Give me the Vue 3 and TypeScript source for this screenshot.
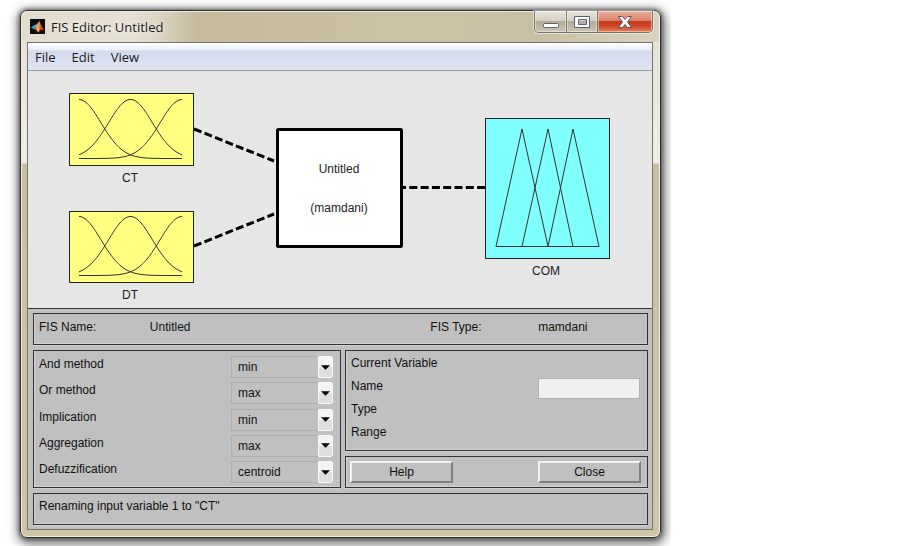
<script setup lang="ts">
import { reactive, ref } from 'vue'

interface Method {
  id: string
  label: string
  options: string[]
}

const methods: Method[] = [
  { id: 'and', label: 'And method', options: ['min', 'prod'] },
  { id: 'or', label: 'Or method', options: ['max', 'probor'] },
  { id: 'implication', label: 'Implication', options: ['min', 'prod'] },
  { id: 'aggregation', label: 'Aggregation', options: ['max', 'sum', 'probor'] },
  { id: 'defuzz', label: 'Defuzzification', options: ['centroid', 'bisector', 'mom'] },
]

const chosen = reactive<Record<string, string>>(
  Object.fromEntries(methods.map((m) => [m.id, m.options[0]])),
)
const variableName = ref('')

const inputs = [
  { name: 'CT', top: 22, height: 72, curves: 22, label: 111 },
  { name: 'DT', top: 140, height: 71, curves: 139, label: 228 },
]

// Gaussian membership function sampled across a 103-unit range
function gaussian(center: number): string {
  const sigma = 21.9
  const points: string[] = []
  for (let x = 0; x <= 103; x += 1) {
    const g = Math.exp(-((x - center) ** 2) / (2 * sigma * sigma))
    points.push(`${x + 10},${(65.5 - 59 * g).toFixed(1)}`)
  }
  return points.join(' ')
}
const curves = [0, 51.5, 103].map(gaussian)
</script>

<template>
  <div class="page">
    <div class="stage">
      <main class="window">
        <header class="titlebar">
          <svg class="logo" viewBox="0 0 16 16" aria-hidden="true">
            <rect width="16" height="16" fill="#0b0b0d" />
            <path d="M0.800 9 L5 6.500 L7.500 8.500 L4.800 11.200 Z" fill="#3f9fc0" />
            <path d="M5 6.500 L7 5.800 L10 2 L8.600 8 L6.600 9.600 Z" fill="#6cc4dc" />
            <path d="M4.800 11.200 L7.200 8.800 Q8.800 6.400 10 2 Q11.800 6.800 15.200 12.400 L12.200 10.800 L8.600 14.400 Q7 11 4.800 11.200 Z" fill="#e0541c" />
            <path d="M10 2 Q10.800 7 9.600 13.400 L8.600 14.400 Q7.400 11.400 6.400 10.400 Q8.800 7 10 2 Z" fill="#f7a540" />
          </svg>
          <h1>FIS Editor: Untitled</h1>
          <div class="captions">
            <button type="button" class="cap" aria-label="Minimize">
              <svg viewBox="0 0 18 14"><rect x="1.500" y="8.500" width="15" height="4" rx="1" fill="#fff" stroke="#5e6070" /></svg>
            </button>
            <button type="button" class="cap" aria-label="Maximize">
              <svg viewBox="0 0 18 14">
                <path fill-rule="evenodd" d="M1.500 1.500h15v11h-15z M5.500 4.500v5h8v-5z" fill="#fff" stroke="#5e6070" />
              </svg>
            </button>
            <button type="button" class="cap close" aria-label="Close window">
              <svg viewBox="0 0 18 14">
                <path d="M2.500 1.500h4l2.500 3 2.500-3h4l-4 5.500 4 5.500h-4l-2.500-3-2.500 3h-4l4-5.500z" fill="#fff" stroke="#5a5468" />
              </svg>
            </button>
          </div>
        </header>

        <div class="client">
          <nav class="menu">
            <button type="button">File</button>
            <button type="button">Edit</button>
            <button type="button">View</button>
          </nav>

          <svg class="diagram" viewBox="0 0 624 237" role="img" aria-label="Fuzzy inference system">
            <g class="link">
              <path d="M166 58 L246 90" />
              <path d="M166 175 L246 143" />
              <path d="M375 116.500 H457" stroke-dashoffset="5" />
            </g>
            <g v-for="item in inputs" :key="item.name">
              <rect class="input-box" x="41.5" :y="item.top + 0.5" width="124" :height="item.height" />
              <g class="curve" :transform="`translate(41 ${item.curves})`">
                <polyline v-for="(c, i) in curves" :key="i" :points="c" />
              </g>
              <text x="102" :y="item.label">{{ item.name }}</text>
            </g>
            <rect class="system-box" x="249.5" y="58.5" width="124" height="117" rx="1" />
            <text x="311" y="102">Untitled</text>
            <text x="311" y="141">(mamdani)</text>
            <rect class="output-box" x="457.5" y="47.5" width="124" height="140" />
            <g class="curve">
              <path d="M468 175.500 L494 58 L520 175.500 M494 175.500 L520 58 L545 175.500 M520 175.500 L545 58 L571 175.500 M468 175.500 H571" />
            </g>
            <text x="518" y="204">COM</text>
          </svg>

          <div class="panel">
            <section class="box summary">
              <span>FIS Name:</span>
              <span>Untitled</span>
              <span>FIS Type:</span>
              <span>mamdani</span>
            </section>

            <div class="columns">
              <section class="box methods">
                <div v-for="m in methods" :key="m.id" class="method">
                  <label :for="m.id">{{ m.label }}</label>
                  <div class="picker">
                    <select :id="m.id" v-model="chosen[m.id]">
                      <option v-for="o in m.options" :key="o">{{ o }}</option>
                    </select>
                    <span class="arrow"><svg viewBox="0 0 10 5"><path d="M0 0H10L5 5Z" /></svg></span>
                  </div>
                </div>
              </section>

              <div class="side">
                <section class="box variable">
                  <span>Current Variable</span>
                  <label class="name-row">Name<input v-model="variableName" type="text" /></label>
                  <span>Type</span>
                  <span>Range</span>
                </section>
                <section class="box actions">
                  <button type="button">Help</button>
                  <button type="button">Close</button>
                </section>
              </div>
            </div>

            <section class="box status">Renaming input variable 1 to "CT"</section>
          </div>
        </div>
      </main>
    </div>
  </div>
</template>

<style>
body {
  background: #fff;
}
</style>

<style scoped>
* {
  box-sizing: border-box;
}
.page {
  display: grid;
  grid-template-columns: minmax(0, 671fr) 231fr;
  font: 12px/16px "Liberation Sans", Arial, sans-serif;
  color: #111;
}
.stage {
  padding: 10px 10px 8px 20px;
  overflow: hidden;
}
.window {
  border: 1px solid #2e2e2c;
  border-radius: 7px;
  padding: 0 7px 7px 6px;
  background:
    linear-gradient(#e4dfd2 0, #f0ede6 152px, #c9bfa2 153px, #cfc5a8 100%);
  box-shadow:
    inset 0 0 0 1px #f1ecdc,
    0 0 4px 1px rgba(0, 0, 0, 0.45),
    1px 3px 11px 3px rgba(0, 0, 0, 0.55);
}
.titlebar {
  display: flex;
  align-items: center;
  height: 31px;
  margin: 0 -6px 0 -5px;
  padding: 0 6px 0 8px;
  border-radius: 6px 6px 0 0;
  background: linear-gradient(90deg, #e2dccd 0, #e6e1d5 110px, #ddd6c6 135px, #c5ba9c 175px, #cbc1a5 60%, #c9bfa4 80%, #d9d2c0 100%);
  box-shadow: inset 0 1px #f1ecdc;
}
.logo {
  width: 15px;
  height: 15px;
}
h1 {
  flex: 1;
  margin: 0 0 0 6px;
  font: 13px/20px "Open Sans", "Noto Sans", sans-serif;
  color: #1a1a1a;
  text-shadow: 0 0 6px #fff;
}
.captions {
  display: flex;
  align-self: flex-start;
  border: 1px solid #77736a;
  border-top: 0;
  border-radius: 0 0 5px 5px;
  overflow: hidden;
  box-shadow: 0 0 0 1px rgba(255, 255, 255, 0.5);
}
.cap {
  display: grid;
  place-items: center;
  width: 31px;
  height: 21px;
  padding: 0;
  border: 0;
  border-right: 1px solid #77736a;
  background: linear-gradient(#e9e6dc 0, #d3cec0 48%, #b3ac98 50%, #cbc5b3 100%);
  box-shadow: inset 0 0 0 1px rgba(255, 255, 255, 0.45);
}
.cap:first-child {
  width: 32px;
}
.cap svg {
  width: 18px;
  height: 14px;
}
.cap.close {
  width: 54px;
  border-right: 0;
  background: linear-gradient(#e8b0a0 0, #dc8068 46%, #c53a1c 50%, #cf4424 70%, #e08058 100%);
}
.client {
  border: 1px solid #77746b;
  background: #e6e6e6;
}
.menu {
  display: flex;
  gap: 16px;
  height: 28px;
  padding: 0 7px;
  border-bottom: 1px solid #9a9ca4;
  background: linear-gradient(#fff 0, #eaeef8 7px, #d4daed 8px, #e0e5f5 100%);
}
.menu button {
  padding: 0;
  border: 0;
  background: none;
  font: 13px/28px "Open Sans", "Noto Sans", sans-serif;
  color: #1a1a1a;
}
.diagram {
  display: block;
  width: 100%;
  height: auto;
}
.diagram text {
  font-size: 12px;
  text-anchor: middle;
  fill: #1c1c24;
}
.link {
  stroke: #000;
  stroke-width: 3;
  stroke-dasharray: 8 3.300;
  fill: none;
}
.curve {
  stroke: #333;
  stroke-width: 1;
  fill: none;
}
.input-box {
  fill: #ffff80;
  stroke: #222;
}
.output-box {
  fill: #80ffff;
  stroke: #222;
}
.system-box {
  fill: #fff;
  stroke: #000;
  stroke-width: 3;
}
.panel {
  display: flex;
  flex-direction: column;
  gap: 5px;
  padding: 4px 4px 4px 5px;
  border-top: 1px solid #333;
  background: #c0c0c0;
}
.box {
  border: 1px solid #333;
  box-shadow: inset 1px -1px #d2d2d2, 0 1px #d2d2d2;
}
.summary {
  display: grid;
  grid-template-columns: 111fr 281fr 108fr 104fr;
  height: 32px;
  padding: 5px;
}
.columns {
  display: grid;
  grid-template-columns: 308fr 303fr;
  gap: 4px;
}
.methods {
  display: flex;
  flex-direction: column;
  justify-content: space-between;
  min-height: 138px;
  padding: 5px 7px 4px 5px;
}
.method {
  display: grid;
  grid-template-columns: 1fr 102px;
}
.picker {
  display: grid;
  grid-template-columns: 1fr 15px;
}
.picker select {
  grid-area: 1 / 1 / 2 / 3;
  appearance: none;
  height: 22px;
  padding: 0 6px;
  border: 1px solid #aeaeb2;
  border-radius: 0;
  background: transparent;
  font: inherit;
  color: inherit;
}
.arrow {
  grid-area: 1 / 2;
  display: grid;
  place-items: center;
  border: 1px solid #f8f8f8;
  border-radius: 0 2px 2px 0;
  background: linear-gradient(#f4f4f4 50%, #dedede 50%);
  pointer-events: none;
}
.arrow svg {
  width: 9px;
  height: 5px;
}
.side {
  display: grid;
  grid-template-rows: 1fr 32px;
  gap: 5px;
}
.variable {
  display: flex;
  flex-direction: column;
  gap: 7px;
  padding: 4px 7px 8px 5px;
}
.name-row {
  display: flex;
  justify-content: space-between;
  height: 16px;
}
.name-row input {
  width: 102px;
  height: 21px;
  padding: 0 4px;
  border: 1px solid #b0b2ba;
  background: #f0f0f0;
  font: inherit;
}
.actions {
  display: flex;
  justify-content: space-between;
  align-items: center;
  padding: 0 6px 0 4px;
}
.actions button {
  width: 103px;
  height: 22px;
  padding: 0;
  border: 2px solid;
  border-color: #f2f2f2 #808080 #808080 #f2f2f2;
  background: #c0c0c0;
  font: inherit;
  color: inherit;
}
.status {
  height: 32px;
  padding: 4px 5px;
}
</style>
